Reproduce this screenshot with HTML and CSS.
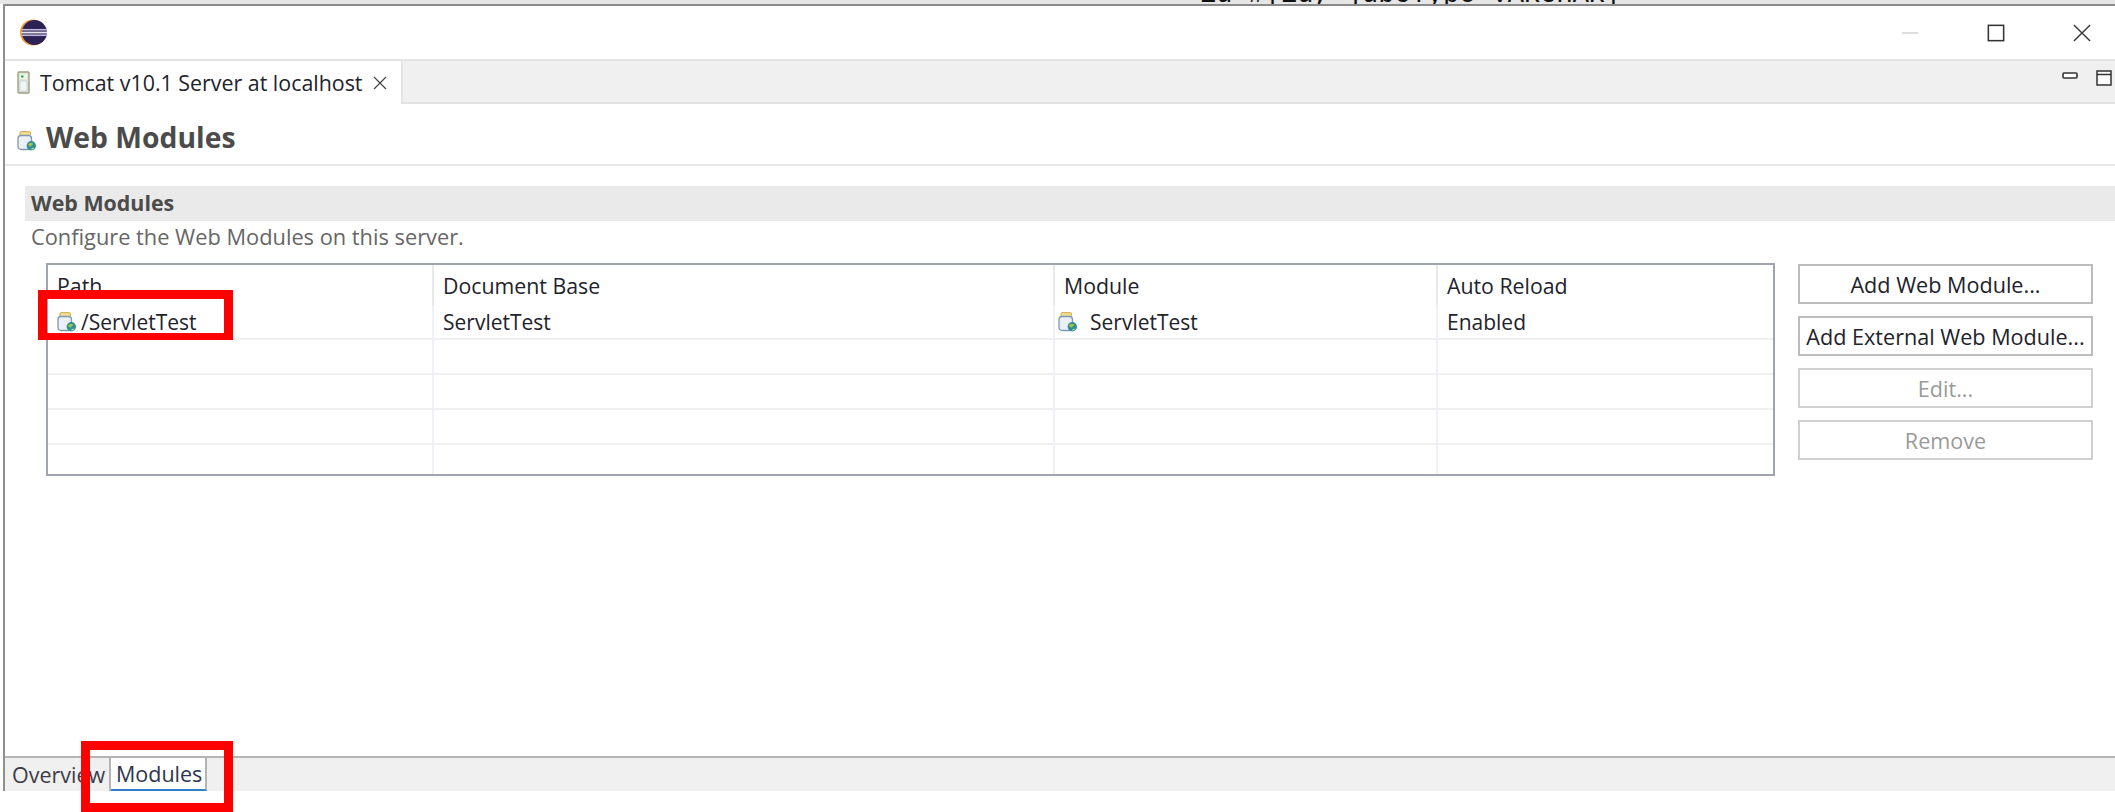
FILE: index.html
```html
<!DOCTYPE html>
<html lang="en">
<head>
<meta charset="utf-8">
<title>Tomcat v10.1 Server at localhost</title>
<link rel="stylesheet" href="styles.css">
</head>
<body>
<svg class="defs" width="0" height="0" aria-hidden="true">
  <defs>
    <symbol id="jar" viewBox="0 0 20 20">
      <rect x="3" y=".7" width="10.500" height="3.800" rx="1" fill="#f4e08e" stroke="#c8a84a" stroke-width="1"/>
      <rect x="1" y="4.500" width="13.500" height="14" rx="3" fill="#e9f0f7" stroke="#7f97b2" stroke-width="1.300"/>
      <circle cx="14.300" cy="14.700" r="4.700" fill="#2f8f95"/>
      <path d="M11 13.500c1.500-2 3.800-1.900 5.300-1 -.2 1.500-1.500 1.100-2 2.400-.5 1.300-2 .8-3.300-1.400z" fill="#a6c24c"/>
      <path d="M14 18.400c.5-1.300 1.900-1.800 3.200-1.500-.6 1-1.800 1.500-3.200 1.500z" fill="#c9d98e"/>
    </symbol>
  </defs>
</svg>
<div class="backdrop"><span class="backdrop-text">id=#{id, jdbcType=VARCHAR}</span></div>
<div class="window">
  <header class="titlebar">
    <svg class="logo" viewBox="0 0 28 28" aria-hidden="true">
      <circle cx="13.500" cy="14" r="13.500" fill="#f29a2e"/>
      <circle cx="15" cy="14" r="13" fill="#2c2255"/>
      <rect x="2" y="10.300" width="26" height="1.700" fill="#bdb8d6"/>
      <rect x="1.500" y="13.100" width="27" height="1.900" fill="#e6e4ef"/>
      <rect x="2" y="16" width="26" height="1.700" fill="#bdb8d6"/>
    </svg>
    <div class="window-controls">
      <svg class="ctl" viewBox="0 0 20 20" aria-hidden="true"><path d="M1 10h18" stroke="#cfcfcf" stroke-width="1.500"/></svg>
      <svg class="ctl" viewBox="0 0 20 20" aria-hidden="true"><rect x="1.500" y="1.500" width="17" height="17" fill="none" stroke="#333" stroke-width="1.700"/></svg>
      <svg class="ctl" viewBox="0 0 20 20" aria-hidden="true"><path d="M1 1l18 18M19 1L1 19" stroke="#333" stroke-width="1.500"/></svg>
    </div>
  </header>
  <nav class="editor-tabs">
    <div class="editor-tab">
      <svg class="server-icon" viewBox="0 0 13 23" aria-hidden="true">
        <rect x="1" y="1" width="11" height="21" rx="1" fill="#dfe7d8" stroke="#9aa381" stroke-width="1.400"/>
        <rect x="3" y="3.500" width="7" height="4" fill="#f4f7ef"/>
        <rect x="4" y="4.500" width="2.500" height="2" fill="#2f9e4f"/>
        <rect x="3" y="10" width="7" height="10" fill="#f2f5f7" stroke="#b8c4cc" stroke-width=".6"/>
      </svg>
      <span>Tomcat v10.1 Server at localhost</span>
      <svg class="tab-close" viewBox="0 0 14 14" aria-hidden="true"><path d="M1 1l12 12M13 1L1 13" stroke="#444" stroke-width="1.200"/></svg>
    </div>
    <div class="view-controls">
      <svg class="view-min" viewBox="0 0 16 8" aria-hidden="true"><rect x="1" y="1" width="14" height="5" rx="1" fill="#fff" stroke="#333" stroke-width="1.600"/></svg>
      <svg class="view-max" viewBox="0 0 16 16" aria-hidden="true"><rect x="1" y="1" width="14" height="14" fill="#fff" stroke="#333" stroke-width="1.500"/><path d="M1 4.500h14" stroke="#333" stroke-width="1.500"/></svg>
    </div>
  </nav>
  <div class="page-header">
    <svg class="jar-icon"><use href="#jar"/></svg>
    <h1>Web Modules</h1>
  </div>
  <main class="content">
    <h2 class="section-title">Web Modules</h2>
    <p class="section-desc">Configure the Web Modules on this server.</p>
    <div class="section-body">
      <div class="table">
        <div class="row head">
          <div class="cell">Path</div>
          <div class="cell">Document Base</div>
          <div class="cell">Module</div>
          <div class="cell">Auto Reload</div>
        </div>
        <div class="row">
          <div class="cell path-cell"><svg class="jar-small"><use href="#jar"/></svg>/ServletTest</div>
          <div class="cell">ServletTest</div>
          <div class="cell module-cell"><svg class="jar-small"><use href="#jar"/></svg>ServletTest</div>
          <div class="cell">Enabled</div>
        </div>
        <div class="row"><div class="cell"></div><div class="cell"></div><div class="cell"></div><div class="cell"></div></div>
        <div class="row"><div class="cell"></div><div class="cell"></div><div class="cell"></div><div class="cell"></div></div>
        <div class="row"><div class="cell"></div><div class="cell"></div><div class="cell"></div><div class="cell"></div></div>
        <div class="row last"><div class="cell"></div><div class="cell"></div><div class="cell"></div><div class="cell"></div></div>
      </div>
      <div class="buttons">
        <button class="btn" type="button">Add Web Module...</button>
        <button class="btn" type="button">Add External Web Module...</button>
        <button class="btn" type="button" disabled>Edit...</button>
        <button class="btn" type="button" disabled>Remove</button>
      </div>
    </div>
  </main>
  <footer class="page-tabs">
    <div class="page-tab">Overview</div>
    <div class="page-tab active">Modules</div>
  </footer>
</div>
<div class="mark mark-path"></div>
<div class="mark mark-tab"></div>
</body>
</html>
```
FILE: styles.css
```css
* { box-sizing: border-box; }
html, body { margin: 0; height: 812px; overflow: hidden; background: #fff; }
body { position: relative; font-family: "Open Sans", "Noto Sans", sans-serif; font-size: 21px; color: #1c1c1c; }
.defs { position: absolute; }
.backdrop { height: 4px; background: #e6e6e6; overflow: hidden; position: relative; }
.backdrop-text { position: absolute; left: 1200px; top: -20px; font: 27px/30px "Liberation Mono", monospace; color: #111; white-space: nowrap; }
.window { height: 787px; margin-left: 3px; border-top: 2px solid #8a8a8a; border-left: 2px solid #8f8f8f; display: flex; flex-direction: column; background: #fff; }
.titlebar { height: 55px; flex: none; display: flex; align-items: center; justify-content: space-between; padding: 0 0 0 14px; border-bottom: 2px solid #e3e3e3; }
.logo { width: 29px; height: 27px; display: block; }
.window-controls { display: flex; align-items: center; gap: 68px; padding-right: 24px; }
.ctl { width: 18px; height: 18px; display: block; }
.editor-tabs { height: 43px; flex: none; display: flex; justify-content: space-between; background: #f0f0f0; border-bottom: 2px solid #e3e3e3; }
.editor-tab { width: 398px; height: 43px; display: flex; align-items: center; padding-left: 12px; background: #fff; border-right: 2px solid #e3e3e3; color: #22222c; white-space: nowrap; margin-bottom: -2px; font-size: 21.400px; }
.editor-tab span { margin-left: 10px; }
.server-icon { width: 13px; height: 23px; display: block; flex: none; }
.tab-close { width: 14px; height: 14px; margin-left: 11px; display: block; flex: none; }
.view-controls { display: flex; align-items: flex-start; gap: 18px; padding: 9px 3px 0 0; }
.view-min { width: 16px; height: 8px; display: block; margin-top: 2px; }
.view-max { width: 16px; height: 16px; display: block; }
.page-header { height: 62px; flex: none; display: flex; align-items: center; padding: 5px 0 0 12px; border-bottom: 2px solid #e8e8e8; }
.jar-icon { width: 20px; height: 20px; display: block; margin-top: 8px; }
.page-header h1 { margin: 0 0 0 9px; font-size: 28.300px; font-weight: 700; color: #4b4b4b; line-height: 34px; }
.content { flex: 1; padding: 20px 0 0 20px; min-height: 0; }
.section-title { margin: 0; height: 35px; background: #eaeaea; font-size: 21.400px; line-height: 33px; font-weight: 700; color: #4b4b4b; padding-left: 6px; }
.section-desc { margin: 0; height: 42px; padding: 1px 0 0 6px; line-height: 30px; color: #666; font-size: 21.800px; }
.section-body { display: flex; align-items: flex-start; padding-left: 21px; }
.table { width: 1729px; height: 213px; flex: none; border: 2px solid #a0a4ad; display: flex; flex-direction: column; overflow: hidden; }
.row { display: grid; grid-template-columns: 386px 621px 383px 1fr; height: 35px; flex: none; border-bottom: 2px solid #f0f0f0; }
.row.head { height: 40px; border-bottom: 0; }
.row.last { border-bottom: 0; height: 30px; }
.cell { display: flex; align-items: center; padding-left: 9px; border-right: 2px solid #eef2f8; color: #22222c; white-space: nowrap; }
.cell:last-child { border-right: 0; }
.head .cell { border-right-color: #e8e8e8; font-size: 21.300px; }
.path-cell { padding-left: 9px; }
.module-cell { padding-left: 3px; }
.jar-small { width: 20px; height: 20px; display: block; flex: none; margin-right: 4px; }
.module-cell .jar-small { margin-right: 12px; }
.buttons { margin-left: 23px; margin-top: 1px; width: 295px; display: flex; flex-direction: column; gap: 12px; flex: none; }
.btn { height: 40px; padding: 0; background: #fff; border: 2px solid #bcbcbc; font: inherit; font-size: 21.600px; color: #22222c; white-space: nowrap; }
.btn:disabled { color: #9a9a9a; border-color: #d0d0d0; }
.page-tabs { height: 35px; flex: none; display: flex; background: #f0f0f0; border-top: 2px solid #b4b4b4; }
.page-tab { height: 33px; display: flex; align-items: center; padding: 0 7px; background: #f0f0f0; color: #3c3c46; font-size: 21.500px; }
.page-tab:first-child { width: 106px; border-right: 2px solid #b4b4b4; }
.page-tab.active { width: 96px; background: #fff; border-right: 2px solid #b4b4b4; border-bottom: 2px solid #2f7fc9; padding: 0 4px 0 5px; color: #2c3650; }
.mark { position: absolute; border: 9px solid #fe0000; }
.mark-path { left: 38px; top: 290px; width: 195px; height: 50px; border-bottom-width: 7px; }
.mark-tab { left: 81px; top: 741px; width: 152px; height: 71px; }
```
